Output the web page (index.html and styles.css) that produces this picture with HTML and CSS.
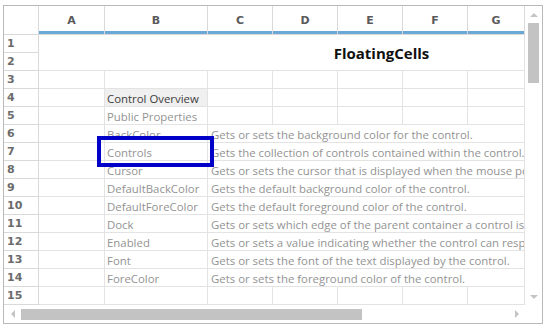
FILE: index.html
```html
<!DOCTYPE html>
<html lang="en">
<head>
  <meta charset="UTF-8">
  <title>FloatingCells</title>
  <link rel="stylesheet" href="styles.css">
</head>
<body>
  <div class="sheet">
    <div class="viewport">
      <div class="grid">
        <!-- column headers -->
        <div class="corner"></div>
        <div class="col-head">A</div>
        <div class="col-head">B</div>
        <div class="col-head">C</div>
        <div class="col-head">D</div>
        <div class="col-head">E</div>
        <div class="col-head">F</div>
        <div class="col-head">G</div>

        <!-- rows 1-2: merged title -->
        <div class="row-head">1</div>
        <div class="cell title">FloatingCells</div>
        <div class="row-head">2</div>

        <div class="row-head">3</div>
        <div class="cell"></div><div class="cell"></div><div class="cell"></div><div class="cell"></div>
        <div class="cell"></div><div class="cell"></div><div class="cell"></div>

        <div class="row-head">4</div>
        <div class="cell"></div>
        <div class="cell caption">Control Overview</div>
        <div class="cell"></div><div class="cell"></div><div class="cell"></div><div class="cell"></div><div class="cell"></div>

        <div class="row-head">5</div>
        <div class="cell"></div>
        <div class="cell">Public Properties</div>
        <div class="cell"></div><div class="cell"></div><div class="cell"></div><div class="cell"></div><div class="cell"></div>

        <div class="row-head">6</div>
        <div class="cell"></div>
        <div class="cell">BackColor</div>
        <div class="cell desc">Gets or sets the background color for the control.</div>

        <div class="row-head">7</div>
        <div class="cell"></div>
        <div class="cell">Controls</div>
        <div class="cell desc">Gets the collection of controls contained within the control.</div>

        <div class="row-head">8</div>
        <div class="cell"></div>
        <div class="cell">Cursor</div>
        <div class="cell desc">Gets or sets the cursor that is displayed when the mouse pc</div>

        <div class="row-head">9</div>
        <div class="cell"></div>
        <div class="cell">DefaultBackColor</div>
        <div class="cell desc">Gets the default background color of the control.</div>

        <div class="row-head">10</div>
        <div class="cell"></div>
        <div class="cell">DefaultForeColor</div>
        <div class="cell desc">Gets the default foreground color of the control.</div>

        <div class="row-head">11</div>
        <div class="cell"></div>
        <div class="cell">Dock</div>
        <div class="cell desc">Gets or sets which edge of the parent container a control is</div>

        <div class="row-head">12</div>
        <div class="cell"></div>
        <div class="cell">Enabled</div>
        <div class="cell desc">Gets or sets a value indicating whether the control can resp</div>

        <div class="row-head">13</div>
        <div class="cell"></div>
        <div class="cell">Font</div>
        <div class="cell desc">Gets or sets the font of the text displayed by the control.</div>

        <div class="row-head">14</div>
        <div class="cell"></div>
        <div class="cell">ForeColor</div>
        <div class="cell desc">Gets or sets the foreground color of the control.</div>

        <div class="row-head">15</div>
        <div class="cell"></div><div class="cell"></div><div class="cell"></div><div class="cell"></div>
        <div class="cell"></div><div class="cell"></div><div class="cell"></div>

        <!-- floating selection frame -->
        <div class="frame"></div>
      </div>

      <div class="vscroll">
        <div class="arrow"><span class="tri up"></span></div>
        <div class="thumb-v"></div>
        <div class="track"></div>
        <div class="arrow"><span class="tri down"></span></div>
      </div>

      <div class="hscroll">
        <div class="arrow"><span class="tri left"></span></div>
        <div class="thumb-h"></div>
        <div class="track"></div>
        <div class="arrow"><span class="tri right"></span></div>
      </div>
      <div class="scroll-corner"></div>
    </div>
  </div>
</body>
</html>
```

FILE: styles.css
```css
/* Reset */
* {
  margin: 0;
  padding: 0;
  box-sizing: border-box;
}

body {
  background: #fff;
  padding: 5px 0 0 3px;
  font-family: 'Open Sans', 'Noto Sans', sans-serif;
}

.sheet {
  width: 540px;
  border: 1px solid #b9b9b9;
  background: #fff;
}

.viewport {
  display: grid;
  grid-template-columns: 521px 17px;
  grid-template-rows: 299px 18px;
}

/* Spreadsheet grid */
.grid {
  position: relative;
  overflow: hidden;
  display: grid;
  grid-template-columns: 35px 66px 103px 65px 65px 65px 65px 57px;
  grid-template-rows: 29px repeat(15, 18px);
}

.corner,
.col-head,
.row-head {
  border-right: 1px solid #d9d9d9;
  border-bottom: 1px solid #d9d9d9;
  background: #fff;
}

.col-head {
  display: flex;
  align-items: center;
  justify-content: center;
  padding-top: 1px;
  font-family: 'DejaVu Sans', sans-serif;
  font-size: 11px;
  font-weight: bold;
  color: #5a5a5a;
  box-shadow: inset 0 -3px 0 #6aa8d6;
}

.row-head {
  display: flex;
  align-items: center;
  padding-left: 3px;
  font-family: 'DejaVu Sans', sans-serif;
  font-size: 11px;
  font-weight: bold;
  color: #6b6b6b;
}

.cell {
  border-right: 1px solid #e3e3e3;
  border-bottom: 1px solid #e3e3e3;
  display: flex;
  align-items: center;
  padding: 1px 0 0 2px;
  font-size: 11.4px;
  color: #939393;
  white-space: nowrap;
  overflow: hidden;
}

.title {
  grid-column: span 7;
  grid-row: span 2;
  justify-content: center;
  padding: 0 0 0 200px;
  font-size: 15px;
  font-weight: bold;
  color: #111;
}

.caption {
  background: #f0f0f0;
  color: #3c3c3c;
}

.desc {
  grid-column: span 5;
  padding-left: 3px;
}

/* selection frame drawn over B7 */
.frame {
  position: absolute;
  left: 93px;
  top: 130px;
  width: 117px;
  height: 31px;
  border: 4px solid #0000c8;
}

/* Scrollbars */
.vscroll {
  display: flex;
  flex-direction: column;
  align-items: center;
  background: #fff;
}

.vscroll .arrow {
  width: 17px;
  height: 17px;
}

.thumb-v {
  width: 11px;
  height: 60px;
  background: #c3c3c3;
}

.track {
  flex: 1;
}

.hscroll {
  display: flex;
  align-items: center;
  background: #fff;
}

.hscroll .arrow {
  width: 17px;
  height: 18px;
}

.thumb-h {
  width: 341px;
  height: 11px;
  background: #c3c3c3;
}

.arrow {
  display: flex;
  align-items: center;
  justify-content: center;
}

.tri {
  width: 0;
  height: 0;
}

.tri.up {
  border-left: 4px solid transparent;
  border-right: 4px solid transparent;
  border-bottom: 4px solid #c4c4c4;
}

.tri.down {
  border-left: 4px solid transparent;
  border-right: 4px solid transparent;
  border-top: 4px solid #c4c4c4;
}

.tri.left {
  border-top: 4px solid transparent;
  border-bottom: 4px solid transparent;
  border-right: 4px solid #c4c4c4;
}

.tri.right {
  border-top: 4px solid transparent;
  border-bottom: 4px solid transparent;
  border-left: 4px solid #c4c4c4;
}

.scroll-corner {
  background: #fff;
}
```
